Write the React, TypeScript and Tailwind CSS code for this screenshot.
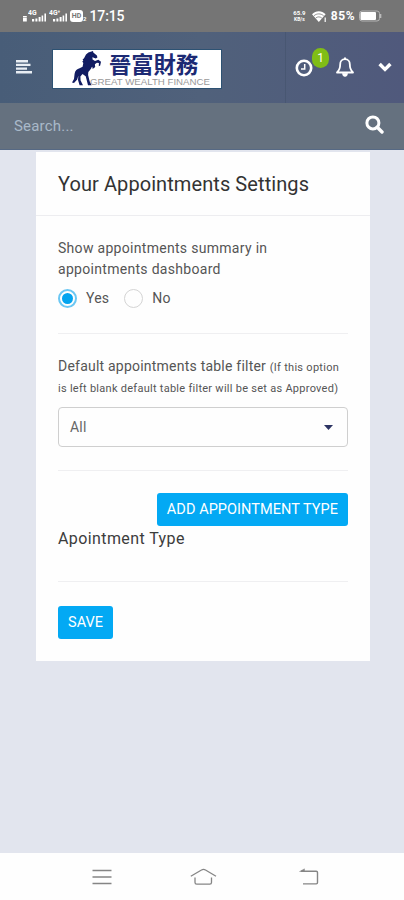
import { useState } from "react";
import type { ReactNode } from "react";

const SignalIcon = ({ label }: { label: string }) => (
  <svg width="19" height="14" viewBox="0 0 19 14" fill="currentColor">
    <text x="0" y="5.8" fontSize="6.8" fontWeight="700">
      {label}
    </text>
    <path d="M4 10h2.2v2.5H4zM7.4 9.5h2v3h-2zM10.6 8h2v4.5h-2zM13.6 6.5h1.6v6h-1.6zM16.4 4.5H18v8h-1.6z" />
  </svg>
);

const StatusBar = () => (
  <div className="flex h-8 items-center justify-between bg-[#757575] pr-[22px] pl-[22px] text-white">
    <div className="flex items-center">
      <svg width="6" height="14" viewBox="0 0 6 14" fill="currentColor">
        <path d="M1 7h3.8v1.5H1zM1 9h3.8v3.5H1z" />
      </svg>
      <SignalIcon label="4G" />
      <span className="ml-[2px]">
        <SignalIcon label="4G⁺" />
      </span>
      <span className="ml-[2px] flex h-[12px] w-[13px] items-center justify-center rounded-[3px] bg-white text-[7px] font-bold text-[#757575]">
        HD
      </span>
      <span className="mt-[5px] text-[6px] font-bold">2</span>
      <span className="ml-[3px] text-[14px] font-medium tracking-[-0.1px]">17:15</span>
    </div>
    <div className="flex items-center">
      <div className="w-[15px] text-center text-[6px] leading-[6px] font-bold">
        <p>65.9</p>
        <p className="text-[5px]">KB/s</p>
      </div>
      <svg className="ml-[5px]" width="15" height="13" viewBox="0 0 15 13">
        <path d="M0 4.2C3.8.3 9.8.3 13.6 4.2L6.8 12z" fill="#fff" />
        <path
          d="M2 5.7c2.8-2.4 6.8-2.4 9.6 0M3.8 8c1.8-1.5 4.2-1.5 6 0"
          fill="none"
          stroke="#757575"
          strokeWidth=".8"
        />
        <path d="M12.6 7.5h1.2V12h-1.2z" fill="#fff" />
      </svg>
      <span className="ml-1 text-[12px] font-bold tracking-[0.5px]">85%</span>
      <svg className="ml-1" width="23" height="12" viewBox="0 0 23 12">
        <rect x=".5" y="1" width="20" height="10" rx="2.5" fill="none" stroke="#b4b4b4" />
        <rect x="1.5" y="2" width="15.5" height="8" rx="1" fill="#fff" />
        <path d="M21.7 4v4" stroke="#c4c4c4" strokeWidth="1.2" />
      </svg>
    </div>
  </div>
);

const Logo = () => (
  <div className="mt-[2px] ml-[19px] flex h-10 w-[170px] border border-[#2d5273] bg-white pl-[19px]">
    <svg width="30" height="37" viewBox="0 0 30 37" fill="#111c62" className="mt-px shrink-0">
      <path d="M14 3.5Q16 1 19.5.5L21 0l.3 1.4 3.6 3.2.5 2-1.6.8-3.4-1.2.2 2.4 2.4 1.4 3.3-1.2 2.7 2-.8 3.8-1.4.6.1-3.3-2-.2-2 1.5.3 2.8-1.8 1.6-1.6-.4 1.3-1.4-1.5.4c-.7 2-2 3.3-3.3 4.7l-.2 3.2 1.5 6.2 2 4H16l-2.3-9-3.2-2.4-2.1 2.5.2 4 2.4 4.8H7.6L6 29l.4-4.5-1.2 4-3.2 3.5-2-.4 2-3.6.6-5.2c.6-3.4 2.4-5 5-5.6l3-1.4.7-3.8-1-1.4 1-1-.7-1.3 1.3-.8z" />
    </svg>
    <div className="flex-1">
      <p className="mt-px ml-[7px] h-[25px] text-[22.3px] leading-[25px] font-bold whitespace-nowrap text-[#1c2a74] [font-family:'Noto_Sans_CJK_TC',sans-serif]">
        晉富財務
      </p>
      <p className="-ml-3 text-[9.7px] leading-[11px] whitespace-nowrap text-[#999] [font-family:'Liberation_Sans',sans-serif]">
        GREAT WEALTH FINANCE
      </p>
    </div>
  </div>
);

const Header = () => (
  <header className="flex h-[71px] items-center bg-linear-to-r from-[#485d78] via-[#50617b] to-[#50597c] pl-[16px] text-white">
    <svg width="17" height="14" viewBox="0 0 17 14" fill="#e8edf3" className="mt-[-2px]">
      <path d="M0 0h12v2.4H0zM0 3.7h14.5v2.4H0zM0 7.4h11v2.4H0zM0 11h16v2.4H0z" />
    </svg>
    <Logo />
    <div className="ml-[63px] flex h-full items-center border-l border-[#485772] pl-[9px]">
      <div className="relative">
        <svg width="18" height="18" viewBox="0 0 18 18" fill="none" stroke="#fff">
          <circle cx="9" cy="9" r="7.2" strokeWidth="2.6" />
          <path d="M9.7 5v5H6" strokeWidth="1.5" />
        </svg>
        <span className="absolute -top-[11px] left-[17px] flex h-5 w-[17px] items-center justify-center rounded-full bg-[#80bd16] text-[12px]">
          1
        </span>
      </div>
      <svg className="ml-[22px]" width="20" height="21" viewBox="0 0 20 21" fill="none" stroke="#fff">
        <path
          d="M10 2.2c-3.3 0-4.8 2.5-4.8 5 0 4.5-1.2 6.3-3.2 8.3h16c-2-2-3.2-3.8-3.2-8.3 0-2.5-1.5-5-4.8-5z"
          strokeWidth="1.8"
          strokeLinejoin="round"
        />
        <path d="M10 .5V2" strokeWidth="2" />
        <path d="M7.5 16.3a2.5 3.2 0 0 0 5 0z" fill="#fff" strokeWidth=".6" />
      </svg>
      <svg className="ml-[23px]" width="14" height="11" viewBox="0 0 14 11" fill="none">
        <path d="m1.6 2 5.4 5.4L12.4 2" stroke="#fff" strokeWidth="3.4" />
      </svg>
    </div>
  </header>
);

const SearchBar = () => (
  <div className="flex h-[47px] items-center justify-between border-b border-[#566984] bg-[#65717f] pr-[20px] pl-[14px]">
    <span className="text-[15px] tracking-[0.2px] text-[#a9b9c9]">Search...</span>
    <svg width="19" height="19" viewBox="0 0 19 19" fill="none" stroke="#fff" className="-mt-[3px]">
      <circle cx="7.9" cy="7.9" r="6" strokeWidth="3" />
      <path d="m12.3 12.3 4.7 4.7" strokeWidth="3.4" strokeLinecap="round" />
    </svg>
  </div>
);

const Radio = ({
  label,
  checked,
  onChange,
}: {
  label: string;
  checked: boolean;
  onChange: () => void;
}) => (
  <label className="flex items-center gap-[9px] text-[14px] tracking-[0.2px] text-[#555]">
    <input type="radio" name="summary" className="sr-only" checked={checked} onChange={onChange} />
    <span
      className={
        checked
          ? "flex size-[19px] items-center justify-center rounded-full border-2 border-[#6bc7f3]"
          : "flex size-[19px] items-center justify-center rounded-full border border-[#d4d4d4]"
      }
    >
      {checked && <span className="size-[11px] rounded-full bg-[#03a4ef]" />}
    </span>
    {label}
  </label>
);

const PrimaryButton = ({ children }: { children: ReactNode }) => (
  <button className="h-[33px] rounded-[3px] bg-[#03a9f4] px-[10px] text-[14.5px] tracking-[0.05px] whitespace-nowrap text-white">
    {children}
  </button>
);

const Divider = () => <hr className="border-[#efeff1]" />;

const NavBar = () => (
  <nav className="flex h-[47px] items-center bg-[#fefefe] pl-[92px] text-[#858585]">
    <svg width="20" height="18" viewBox="0 0 20 18" fill="none" stroke="currentColor" strokeWidth="1.3">
      <path d="M.5 2.5h19M.5 9h19M.5 15.5h19" />
    </svg>
    <svg className="ml-[78px]" width="27" height="18" viewBox="0 0 27 18" fill="none" stroke="currentColor" strokeWidth="1.3" strokeLinejoin="round">
      <path d="M.8 8.2 11.5 2q2-1.1 4 0L26 8.2M5 9.5v5q0 1.7 1.7 1.7h13.1q1.7 0 1.7-1.7v-5" />
    </svg>
    <svg className="ml-[82px]" width="21" height="18" viewBox="0 0 21 18" fill="none" stroke="currentColor" strokeWidth="1.4">
      <path d="M2 3.2h15.2q1.3 0 1.3 1.3v10.1q0 1.3-1.3 1.3H4" />
      <path d="M.5 3.5 5.5.8v2.7z" fill="currentColor" strokeWidth=".4" />
    </svg>
  </nav>
);

export default function App() {
  const [summary, setSummary] = useState("Yes");

  return (
    <div className="flex h-[900px] w-[404px] flex-col overflow-hidden bg-[#e2e5ee] [font-family:Roboto,sans-serif]">
      <StatusBar />
      <Header />
      <SearchBar />
      <main className="flex-1 px-9 pt-[2px]">
        <section className="h-[509px] w-[334px] bg-[#fefefe]">
          <h1 className="h-16 border-b border-[#ededf0] pl-[22px] text-[20px] leading-[65px] tracking-[0.08px] text-[#333]">
            Your Appointments Settings
          </h1>
          <div className="px-[22px]">
            <div className="h-[117px] pt-[22px]">
              <p className="text-[14px] leading-[21px] tracking-[0.3px] text-[#555]">
                Show appointments summary in
                <br />
                appointments dashboard
              </p>
              <div className="mt-[8px] flex gap-[15px]">
                {["Yes", "No"].map((item) => (
                  <Radio
                    key={item}
                    label={item}
                    checked={summary === item}
                    onChange={() => setSummary(item)}
                  />
                ))}
              </div>
            </div>
            <Divider />
            <div className="h-[136px] pt-[22px]">
              <p className="h-11 text-[14px] leading-[21px] tracking-[0.22px] whitespace-nowrap text-[#555]">
                Default appointments table filter{" "}
                <small className="text-[11px] leading-3 tracking-[0.28px]">(If this option</small>
                <br />
                <small className="text-[11px] leading-3 tracking-[0.27px]">
                  is left blank default table filter will be set as Approved)
                </small>
              </p>
              <div className="mt-[7px] flex h-10 items-center justify-between rounded-[4px] border-[1.5px] border-[#cfcfcf] pr-[14px] pl-[11px] text-[14px] tracking-[0.2px] text-[#666]">
                All
                <svg width="9" height="5" viewBox="0 0 9 5" fill="#2d3463">
                  <path d="M0 0h9L4.5 5z" />
                </svg>
              </div>
            </div>
            <Divider />
            <div className="h-[110px] pt-[22px]">
              <div className="flex justify-end">
                <PrimaryButton>ADD APPOINTMENT TYPE</PrimaryButton>
              </div>
              <p className="mt-px text-[16px] leading-6 tracking-[0.4px] text-[#3c3c3c]">
                Apointment Type
              </p>
            </div>
            <Divider />
            <div className="pt-[24px]">
              <PrimaryButton>SAVE</PrimaryButton>
            </div>
          </div>
        </section>
      </main>
      <NavBar />
    </div>
  );
}
